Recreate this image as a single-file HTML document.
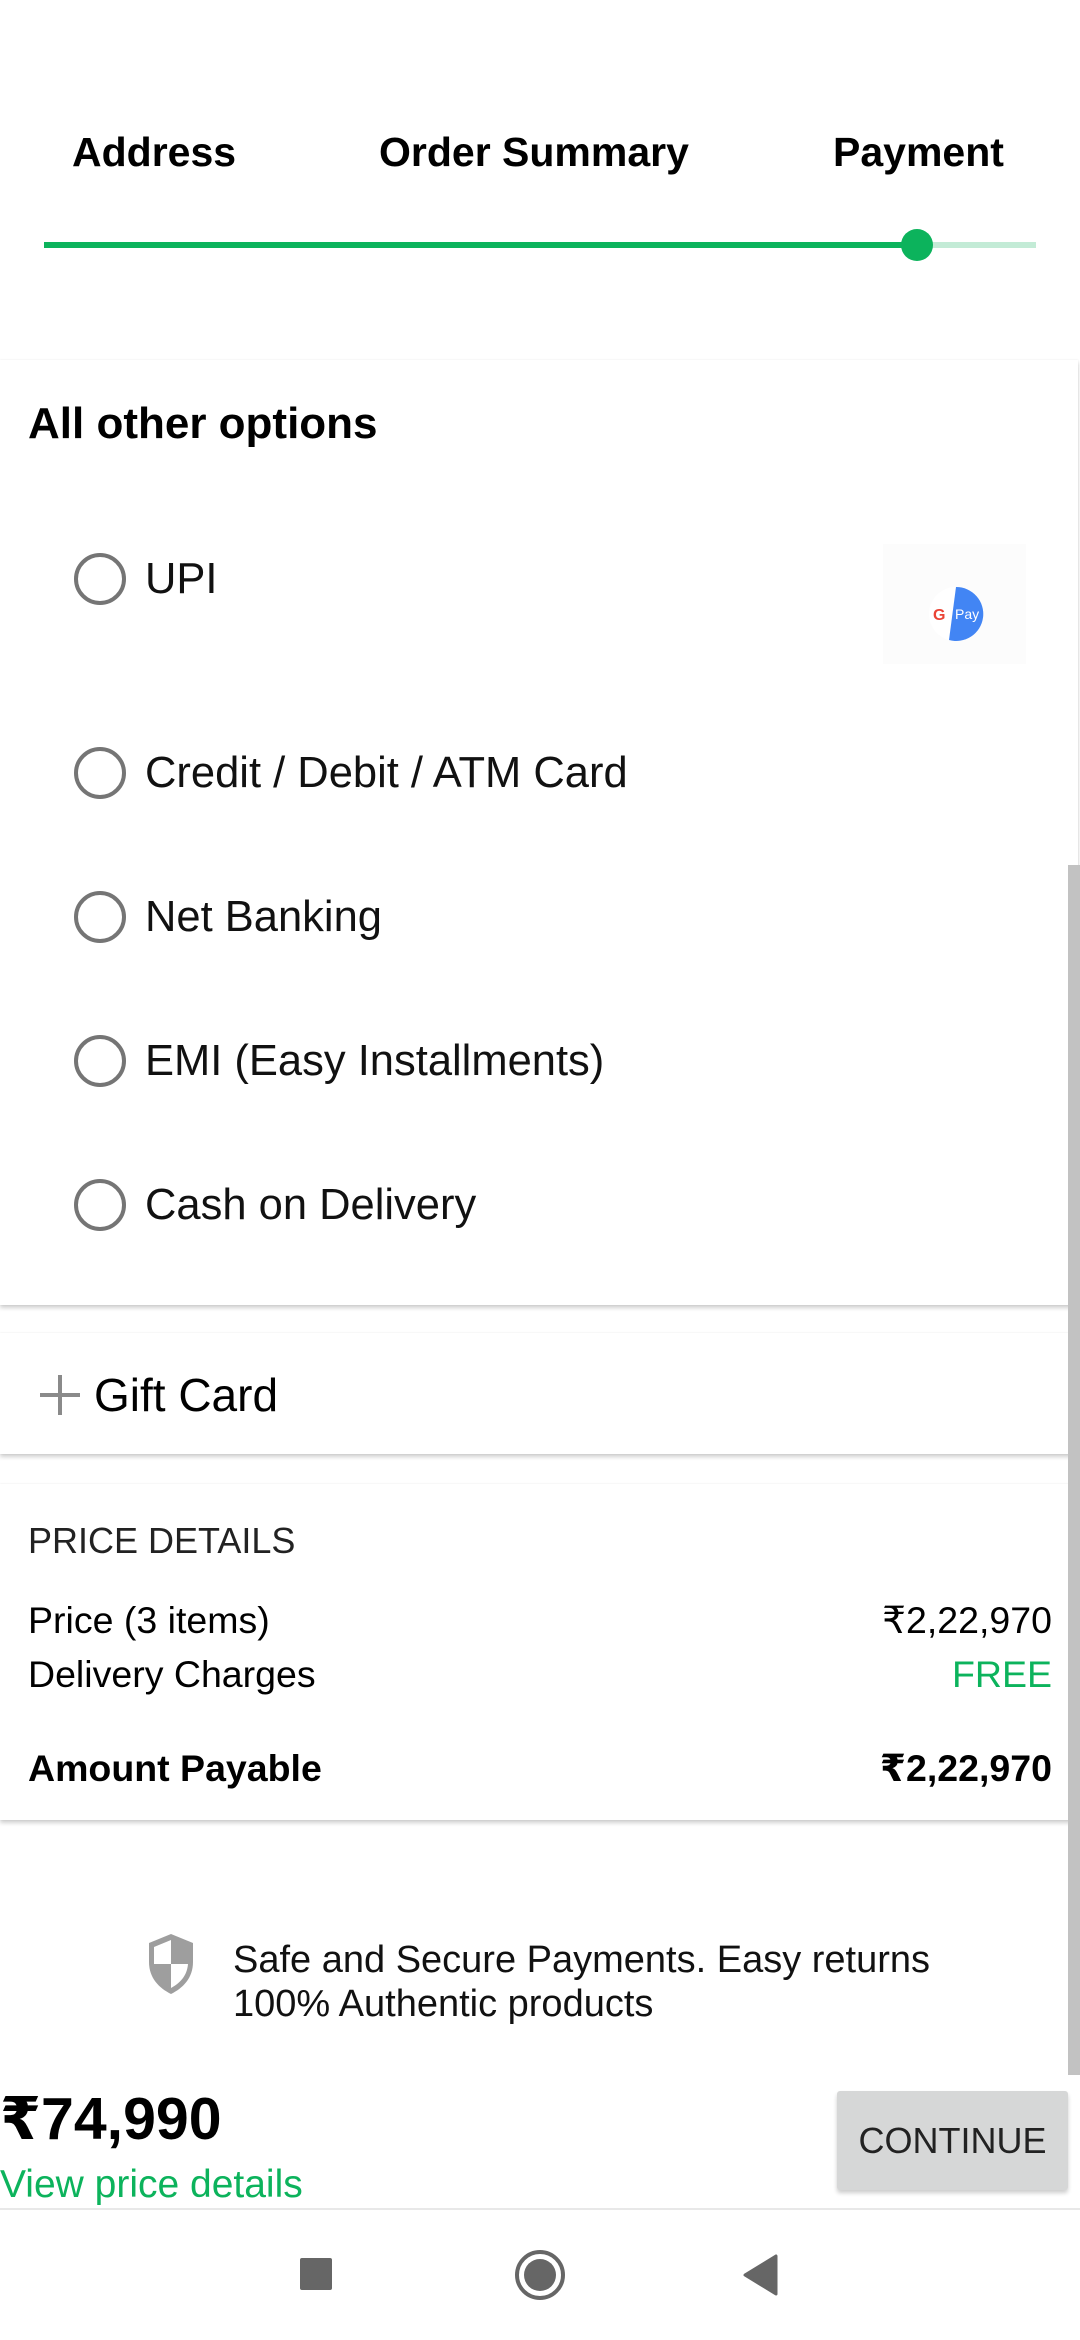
<!DOCTYPE html>
<html><head><meta charset="utf-8"><style>
*{margin:0;padding:0;box-sizing:border-box}
body{width:1080px;height:2340px;background:#fff;position:relative;overflow:hidden;font-family:"Liberation Sans","DejaVu Sans",sans-serif;color:#000}
.a{position:absolute;white-space:nowrap}
.t{font-weight:bold;font-size:41px;line-height:50px}
.radio{position:absolute;left:74px;width:52px;height:52px;border:4.5px solid #757575;border-radius:50%}
.opt{position:absolute;left:145px;font-size:43.5px;line-height:50px;color:#111}
.card{position:absolute;left:0;width:1078px;background:#fff;box-shadow:0 3px 4px rgba(0,0,0,.18),0 0 2px rgba(0,0,0,.08)}
.pd{font-size:37.5px;line-height:44px}
</style></head><body>
<div class="a t" style="left:72px;top:127px">Address</div>
<div class="a t" style="left:379px;top:127px">Order Summary</div>
<div class="a t" style="left:833px;top:127px">Payment</div>
<div class="a" style="left:44px;top:242px;width:880px;height:6px;background:#0cb35c"></div>
<div class="a" style="left:920px;top:242px;width:116px;height:6px;background:#c3ebd6"></div>
<div class="a" style="left:901px;top:229px;width:32px;height:32px;border-radius:50%;background:#0cb35c"></div>

<div class="card" style="top:360px;height:945px"></div>
<div class="a t" style="left:28px;top:399px;font-size:44px">All other options</div>
<div class="radio" style="top:553px"></div><div class="opt" style="top:554px">UPI</div>
<div class="a" style="left:883px;top:544px;width:143px;height:120px;background:#fcfcfc"></div>
<svg class="a" style="left:927px;top:585px" width="58" height="58" viewBox="0 0 58 58">
<circle cx="29" cy="29" r="27" fill="#fff"/>
<path d="M29 2 A27 27 0 1 1 22 55 Z" fill="#4285f4"/>
<text x="6" y="35" font-size="16" font-family="Liberation Sans" font-weight="bold" fill="#ea4335">G</text>
<text x="28" y="34" font-size="14" font-family="Liberation Sans" fill="#fff">Pay</text>
</svg>
<div class="radio" style="top:747px"></div><div class="opt" style="top:748px">Credit / Debit / ATM Card</div>
<div class="radio" style="top:891px"></div><div class="opt" style="top:892px">Net Banking</div>
<div class="radio" style="top:1035px"></div><div class="opt" style="top:1036px">EMI (Easy Installments)</div>
<div class="radio" style="top:1179px"></div><div class="opt" style="top:1180px">Cash on Delivery</div>

<div class="card" style="top:1333px;height:121px"></div>
<div class="a" style="left:40px;top:1393px;width:40px;height:4px;background:#8a8a8a"></div>
<div class="a" style="left:58px;top:1375px;width:4px;height:40px;background:#8a8a8a"></div>
<div class="a" style="left:94px;top:1370px;font-size:46px;line-height:50px">Gift Card</div>

<div class="card" style="top:1484px;height:336px"></div>
<div class="a" style="left:28px;top:1520px;font-size:36px;line-height:42px;color:#222">PRICE DETAILS</div>
<div class="a pd" style="left:28px;top:1598px">Price (3 items)</div>
<div class="a pd" style="right:28px;top:1598px">₹2,22,970</div>
<div class="a pd" style="left:28px;top:1652px">Delivery Charges</div>
<div class="a pd" style="right:28px;top:1652px;color:#0cb35c">FREE</div>
<div class="a pd" style="left:28px;top:1746px;font-weight:bold">Amount Payable</div>
<div class="a pd" style="right:28px;top:1746px;font-weight:bold">₹2,22,970</div>

<div class="a" style="left:1068px;top:865px;width:12px;height:1210px;background:#c2c2c2"></div>

<svg class="a" style="left:145px;top:1932px" width="52" height="64" viewBox="0 0 52 64">
<path d="M26 2 L48 11 V30 C48 46 38 56 26 62 C14 56 4 46 4 30 V11 Z" fill="#9e9e9e"/>
<path d="M26 32 H43 C42 44 35 51 26 56 Z" fill="#fff"/>
<path d="M26 8 V32 H9 V15 Z" fill="#fff"/>
</svg>
<div class="a" style="left:233px;top:1938px;font-size:38px;line-height:44px;color:#111">Safe and Secure Payments. Easy returns<br>100% Authentic products</div>

<div class="a" style="left:0;top:2086px;font-size:59px;line-height:66px;font-weight:bold">₹74,990</div>
<div class="a" style="left:0;top:2163px;font-size:39px;line-height:44px;color:#0cb35c">View price details</div>
<div class="a" style="left:837px;top:2091px;width:231px;height:99px;background:#d6d7d7;border-radius:3px;box-shadow:0 3px 4px rgba(0,0,0,.2);font-size:36px;line-height:99px;text-align:center;color:#222">CONTINUE</div>
<div class="a" style="left:0;top:2208px;width:1080px;height:2px;background:#e8e8e8"></div>

<div class="a" style="left:300px;top:2258px;width:32px;height:32px;background:#666;border-radius:2px"></div>
<div class="a" style="left:515px;top:2250px;width:50px;height:50px;border:4px solid #666;border-radius:50%"></div>
<div class="a" style="left:524px;top:2259px;width:32px;height:32px;background:#666;border-radius:50%"></div>
<svg class="a" style="left:742px;top:2254px" width="38" height="42" viewBox="0 0 38 42"><path d="M34 2 V40 L3 21 Z" fill="#666" stroke="#666" stroke-width="3" stroke-linejoin="round"/></svg>
</body></html>
